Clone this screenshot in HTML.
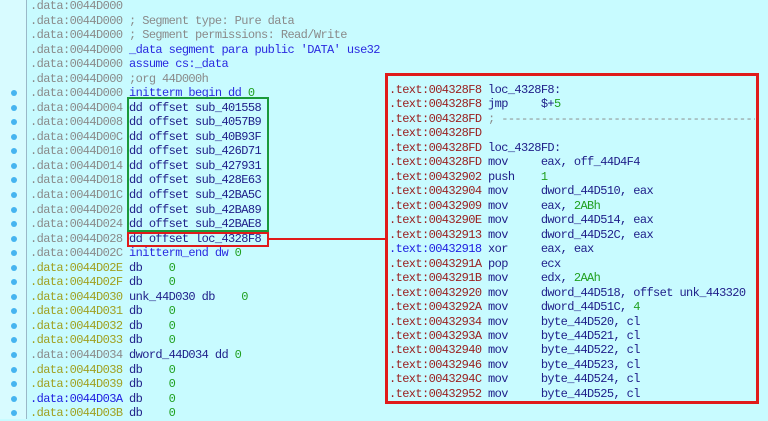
<!DOCTYPE html>
<html><head><meta charset="utf-8"><style>
body{margin:0;width:768px;height:419px;overflow:hidden;background:#c8fbff;font-family:"Liberation Mono",monospace;font-size:12px;letter-spacing:-0.6px;position:relative}
.r{position:absolute;white-space:pre;height:14.5px;line-height:14.5px}
.g{color:#8a8a8a}.o{color:#a0a020}.b{color:#2020e0}.n{color:#20208a}.k{color:#2a2ae0}.z{color:#20a020}.m{color:#9a2020}.c{color:#8a8a8a}
.dot{position:absolute;left:11px;width:6px;height:6px;border-radius:50%;background:#46b4f0}
#vl{position:absolute;left:26px;top:0;width:1px;height:419px;background:#9ab8c8}
#gut{position:absolute;left:0;top:0;width:26px;height:419px;background:#d8fbff}
.box{position:absolute;box-sizing:border-box}
</style></head><body>
<div id="gut"></div><div id="vl"></div>
<div id="L"></div>
<div id="R"></div>
<div class="box" style="left:127px;top:97px;width:142px;height:135px;border:2px solid #1a9a3a"></div>
<div class="box" style="left:127px;top:232px;width:142px;height:15px;border:2px solid #e01a1a"></div>
<div class="box" style="left:268px;top:238px;width:119px;height:2px;background:#e01a1a"></div>
<div class="box" style="left:385px;top:73px;width:374px;height:331px;border:3px solid #e01a1a"></div>
<script>
var P=14.54;
var L=[
['g','.data:0044D000',''],
['g','.data:0044D000','<span class="c"> ; Segment type: Pure data</span>'],
['g','.data:0044D000','<span class="c"> ; Segment permissions: Read/Write</span>'],
['g','.data:0044D000','<span class="k"> _data segment para public \'DATA\' use32</span>'],
['g','.data:0044D000','<span class="k"> assume cs:_data</span>'],
['g','.data:0044D000','<span class="c"> ;org 44D000h</span>'],
['g','.data:0044D000','<span class="k"> initterm begin dd </span><span class="z">0</span>'],
['g','.data:0044D004','<span class="n"> dd offset sub_401558</span>'],
['g','.data:0044D008','<span class="n"> dd offset sub_4057B9</span>'],
['g','.data:0044D00C','<span class="n"> dd offset sub_40B93F</span>'],
['g','.data:0044D010','<span class="n"> dd offset sub_426D71</span>'],
['g','.data:0044D014','<span class="n"> dd offset sub_427931</span>'],
['g','.data:0044D018','<span class="n"> dd offset sub_428E63</span>'],
['g','.data:0044D01C','<span class="n"> dd offset sub_42BA5C</span>'],
['g','.data:0044D020','<span class="n"> dd offset sub_42BA89</span>'],
['g','.data:0044D024','<span class="n"> dd offset sub_42BAE8</span>'],
['g','.data:0044D028','<span class="n"> dd offset loc_4328F8</span>'],
['g','.data:0044D02C','<span class="k"> initterm_end dw </span><span class="z">0</span>'],
['o','.data:0044D02E','<span class="n"> db    </span><span class="z">0</span>'],
['o','.data:0044D02F','<span class="n"> db    </span><span class="z">0</span>'],
['o','.data:0044D030','<span class="n"> unk_44D030 db    </span><span class="z">0</span>'],
['o','.data:0044D031','<span class="n"> db    </span><span class="z">0</span>'],
['o','.data:0044D032','<span class="n"> db    </span><span class="z">0</span>'],
['o','.data:0044D033','<span class="n"> db    </span><span class="z">0</span>'],
['g','.data:0044D034','<span class="n"> dword_44D034 dd </span><span class="z">0</span>'],
['o','.data:0044D038','<span class="n"> db    </span><span class="z">0</span>'],
['o','.data:0044D039','<span class="n"> db    </span><span class="z">0</span>'],
['b','.data:0044D03A','<span class="n"> db    </span><span class="z">0</span>'],
['o','.data:0044D03B','<span class="n"> db    </span><span class="z">0</span>']];
var h='';
L.forEach(function(l,i){var t=i*P-1;h+='<div class="r" style="left:30px;top:'+t+'px"><span class="'+l[0]+'">'+l[1]+'</span>'+l[2]+'</div>';if(i>=6)h+='<div class="dot" style="top:'+(t+4)+'px"></div>';});
document.getElementById('L').innerHTML=h;
var R=[
['m','004328F8','<span class="n"> loc_4328F8:</span>'],
['m','004328F8','<span class="n"> jmp     $+</span><span class="z">5</span>'],
['m','004328FD','<span class="c"> ; ---------------------------------------------------</span>'],
['m','004328FD',''],
['m','004328FD','<span class="n"> loc_4328FD:</span>'],
['m','004328FD','<span class="n"> mov     eax, off_44D4F4</span>'],
['m','00432902','<span class="n"> push    </span><span class="z">1</span>'],
['m','00432904','<span class="n"> mov     dword_44D510, eax</span>'],
['m','00432909','<span class="n"> mov     eax, </span><span class="z">2ABh</span>'],
['m','0043290E','<span class="n"> mov     dword_44D514, eax</span>'],
['m','00432913','<span class="n"> mov     dword_44D52C, eax</span>'],
['b','00432918','<span class="n"> xor     eax, eax</span>'],
['m','0043291A','<span class="n"> pop     ecx</span>'],
['m','0043291B','<span class="n"> mov     edx, </span><span class="z">2AAh</span>'],
['m','00432920','<span class="n"> mov     dword_44D518, offset unk_443320</span>'],
['m','0043292A','<span class="n"> mov     dword_44D51C, </span><span class="z">4</span>'],
['m','00432934','<span class="n"> mov     byte_44D520, cl</span>'],
['m','0043293A','<span class="n"> mov     byte_44D521, cl</span>'],
['m','00432940','<span class="n"> mov     byte_44D522, cl</span>'],
['m','00432946','<span class="n"> mov     byte_44D523, cl</span>'],
['m','0043294C','<span class="n"> mov     byte_44D524, cl</span>'],
['m','00432952','<span class="n"> mov     byte_44D525, cl</span>']];
h='';
R.forEach(function(l,i){var t=83+i*14.47;h+='<div class="r" style="left:389px;top:'+t+'px;width:366px;overflow:hidden"><span class="'+l[0]+'">.text:'+l[1]+'</span>'+l[2]+'</div>';});
document.getElementById('R').innerHTML=h;
</script>
</body></html>
